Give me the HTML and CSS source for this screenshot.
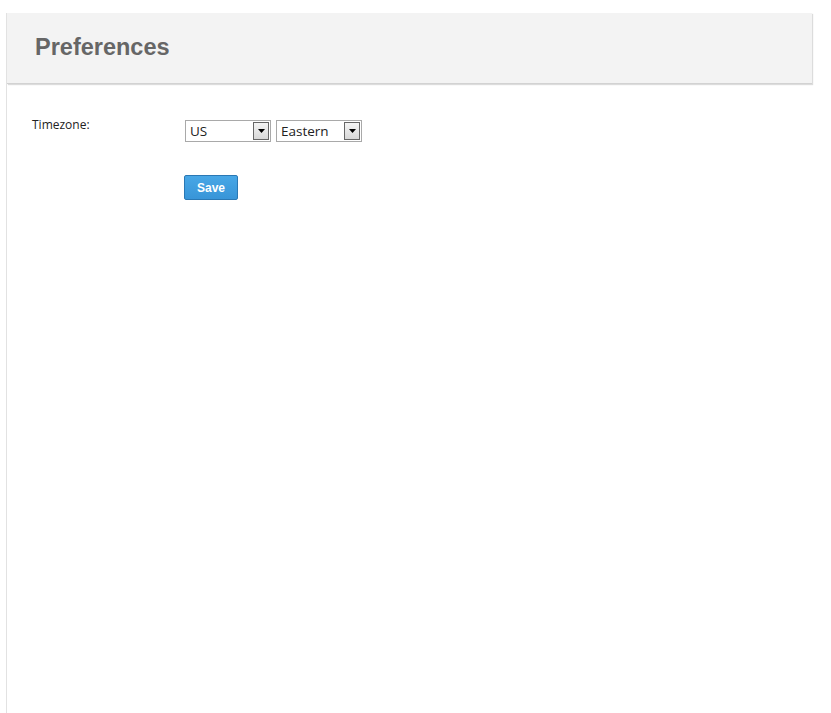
FILE: index.html
```html
<!DOCTYPE html>
<html>
<head>
<meta charset="utf-8">
<link rel="stylesheet" href="styles.css">
</head>
<body>
<div class="panel">
  <div class="panel-header"><h1>Preferences</h1></div>
  <div class="panel-body">
    <div class="row">
      <div class="label">Timezone:</div>
      <div class="controls">
        <div class="select w86"><span class="val">US</span><span class="arrow"><svg width="7" height="4" viewBox="0 0 7 4"><path d="M0 0H7L3.5 4Z" fill="#000"/></svg></span></div>
        <div class="select w86"><span class="val">Eastern</span><span class="arrow"><svg width="7" height="4" viewBox="0 0 7 4"><path d="M0 0H7L3.5 4Z" fill="#000"/></svg></span></div>
      </div>
    </div>
    <div class="row actions">
      <div class="label"></div>
      <button class="btn">Save</button>
    </div>
  </div>
</div>
</body>
</html>
```
FILE: styles.css
```css
html, body { margin: 0; padding: 0; background: #fff; height: 100%; }
body { font-family: "Open Sans", "Liberation Sans", sans-serif; color: #222; overflow: hidden; }
.panel {
  margin: 13px 0 0 6px;
  width: 806px;
  min-height: 700px;
  border-left: 1px solid #e2e2e2;
  box-sizing: border-box;
}
.panel-header {
  height: 71px;
  background: #f3f3f3;
  border-bottom: 1px solid #d2d2d2;
  box-shadow: 1px 1px 1px #dcdcdc;
  box-sizing: border-box;
  padding: 20px 0 0 28px;
}
.panel-header h1 {
  margin: 0;
  font-family: "Liberation Sans", Arial, sans-serif;
  font-size: 23.5px;
  font-weight: bold;
  color: #666;
  line-height: 28px;
}
.panel-body { padding: 36px 0 0 25px; }
.row { display: flex; }
.label { width: 153px; font-size: 12px; line-height: 16px; margin-top: -3px; color: #222; }
.controls { display: flex; gap: 5px; }
.select {
  height: 22px;
  border: 1px solid #a9a9a9;
  box-sizing: border-box;
  display: flex;
  align-items: center;
  justify-content: space-between;
  font-size: 13.5px;
  color: #222;
  padding: 0 1px 0 4px;
  background: #fff;
}
.w86 { width: 86px; }
.arrow {
  width: 16px;
  height: 18px;
  box-sizing: border-box;
  border: 1px solid #666;
  background: linear-gradient(#f4f4f4, #d8d8d8);
  display: flex;
  align-items: center;
  justify-content: center;
}
.actions { margin-top: 33px; }
.btn {
  margin-left: -1px;
  width: 54px;
  height: 25px;
  background: linear-gradient(#48a7e6, #3895d8);
  border: 1px solid #2a78b4;
  border-radius: 2px;
  color: #fff;
  font-family: "Liberation Sans", Arial, sans-serif;
  font-weight: bold;
  font-size: 12px;
  padding: 0;
}
```
